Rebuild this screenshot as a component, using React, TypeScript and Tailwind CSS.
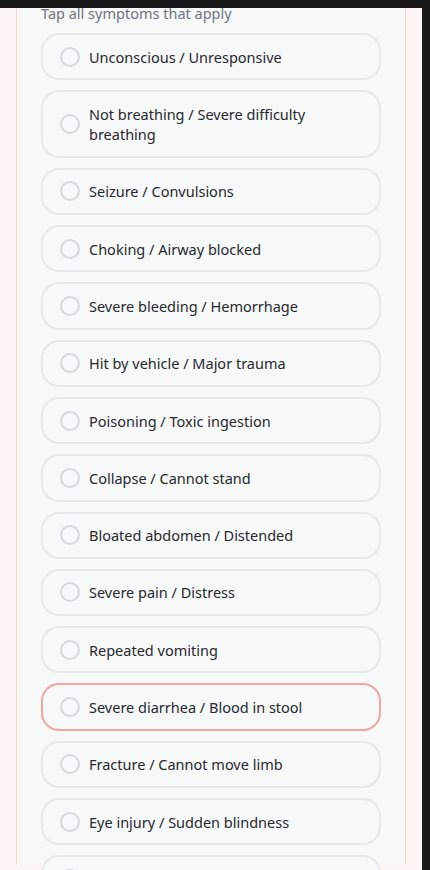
const SYMPTOMS = [
  "Unconscious / Unresponsive",
  "Not breathing / Severe difficulty breathing",
  "Seizure / Convulsions",
  "Choking / Airway blocked",
  "Severe bleeding / Hemorrhage",
  "Hit by vehicle / Major trauma",
  "Poisoning / Toxic ingestion",
  "Collapse / Cannot stand",
  "Bloated abdomen / Distended",
  "Severe pain / Distress",
  "Repeated vomiting",
  "Severe diarrhea / Blood in stool",
  "Fracture / Cannot move limb",
  "Eye injury / Sudden blindness",
  "Heatstroke / Overheating",
];

function SymptomRow({ label, active }: { label: string; active?: boolean }) {
  return (
    <button
      type="button"
      className={
        active
          ? "flex w-full items-center gap-[9px] rounded-[18px] border-2 border-[#f0a7a2] bg-[#f7f8f8] px-[16px] py-[11.66px] text-left"
          : "flex w-full items-center gap-[9px] rounded-[18px] border-2 border-[#e6e8ea] bg-[#f7f8f8] px-[16px] py-[11.66px] text-left"
      }
    >
      <span className="ml-[1px] h-[20px] w-[20px] shrink-0 rounded-full border-2 border-[#d6d8dc] bg-[#f7f8f8]" />
      <span className="text-[14.5px] leading-5 font-normal text-[#27292c]">{label}</span>
    </button>
  );
}

export default function App() {
  return (
    <div
      className="flex h-[870px] w-[430px] overflow-hidden bg-[#171817]"
      style={{ fontFamily: '"Noto Sans", "Open Sans", sans-serif' }}
    >
      <div className="mt-[8px] h-[862px] w-[422px] overflow-hidden bg-[#fdf5f4] px-4">
        <div className="h-full border-x border-[#f5d8d6] bg-[#f7f8f8] px-6">
          <div className="-mt-[5px] flex flex-col gap-[10px]">
            <p className="text-[14.5px] leading-5 text-[#70757c]">Tap all symptoms that apply</p>
            {SYMPTOMS.map((s) => (
              <SymptomRow key={s} label={s} active={s.startsWith("Severe diarrhea")} />
            ))}
          </div>
        </div>
      </div>
    </div>
  );
}
